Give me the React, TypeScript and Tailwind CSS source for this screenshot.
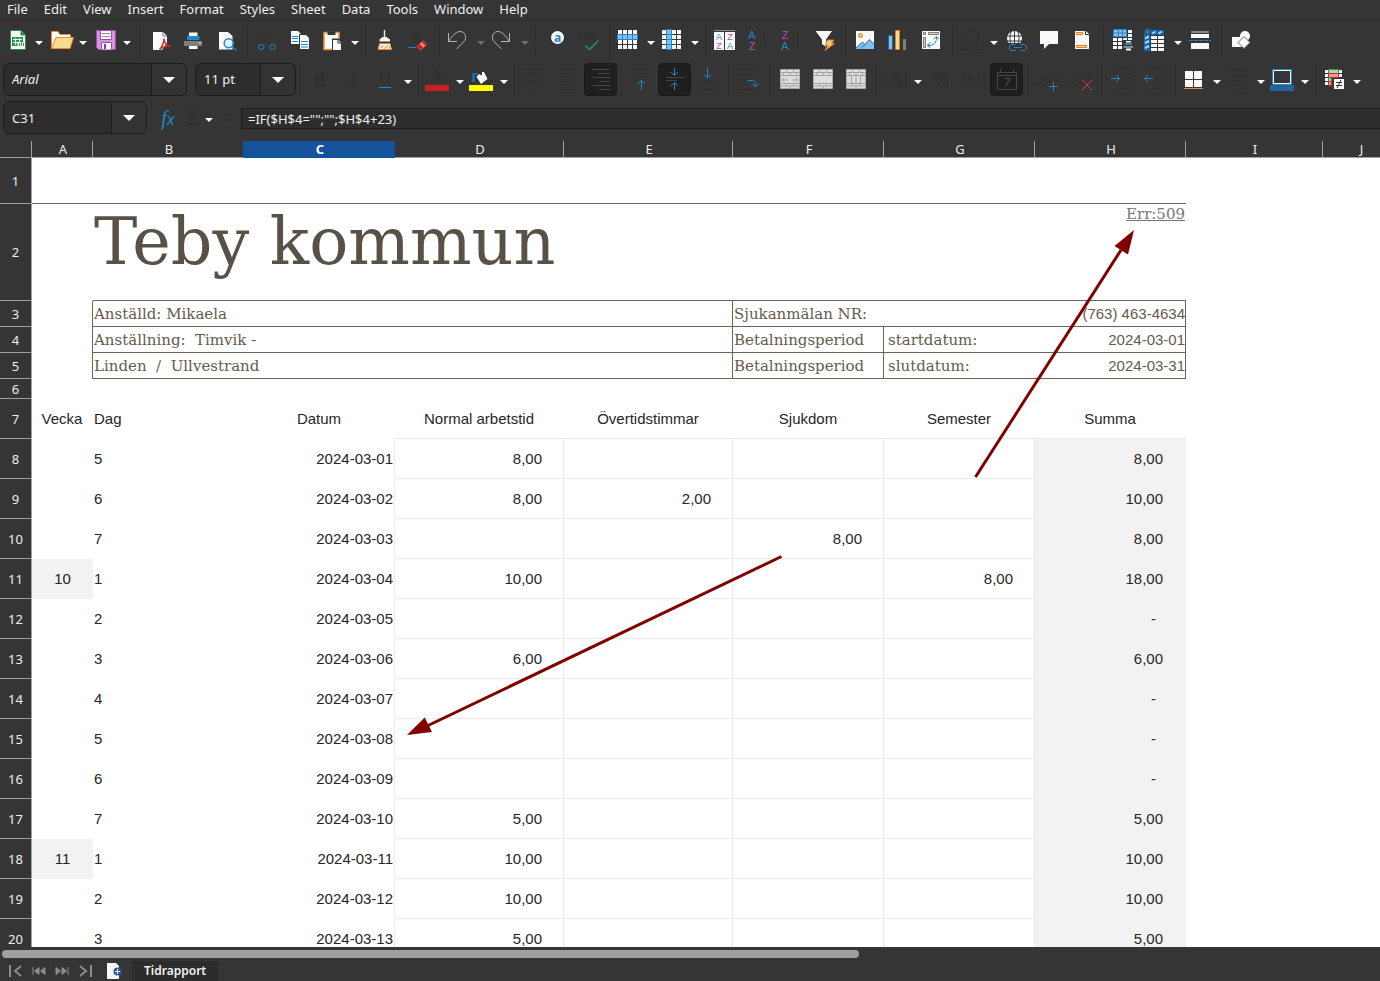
import { Fragment } from "react";
import type { ReactNode } from "react";

const FAINT = "#2f2f2f";
const BLUE = "#1e88c9";
const PURPLE = "#b04fb8";
const WHITE = "#fafafa";

interface ToolItem {
  label: string;
  icon: ReactNode;
  drop?: boolean;
  dimDrop?: boolean;
  active?: boolean;
}

type ToolGroup = ToolItem[];

/* Small drawing helpers */

const lines = (rows: [number, number, number][], color: string) =>
  rows.map(([x1, x2, y]) => (
    <path key={y} d={`M${x1} ${y}H${x2}`} stroke={color} />
  ));

const squares = (xs: number[], ys: number[], w: number, h: number) =>
  xs.map((x) =>
    ys.map((y) => (
      <rect key={`${x}-${y}`} x={x} y={y} width={w} height={h} fill={WHITE} />
    ))
  );

interface GlyphProps {
  x: number;
  y: number;
  size: number;
  color: string;
  bold?: boolean;
  italic?: boolean;
  family?: string;
  children: string;
}

const Glyph = ({ x, y, size, color, bold, italic, family = "Noto Sans", children }: GlyphProps) => (
  <text
    x={x}
    y={y}
    fontSize={size}
    fill={color}
    stroke="none"
    textAnchor="middle"
    fontFamily={`${family}, sans-serif`}
    fontWeight={bold ? 700 : 400}
    fontStyle={italic ? "italic" : "normal"}
  >
    {children}
  </text>
);

const Caret = ({ dim, large }: { dim?: boolean; large?: boolean }) => (
  <svg
    width={large ? 12 : 8}
    height={large ? 6 : 4}
    viewBox="0 0 12 6"
    aria-hidden="true"
  >
    <path d="M0 0H12L6 6Z" fill={dim ? "#6e6e6e" : "#ffffff"} />
  </svg>
);

/* Standard toolbar */

const standardGroups: ToolGroup[] = [
  [
    {
      label: "New",
      drop: true,
      icon: (
        <>
          <path d="M9.5 6.5H20L24.5 11V25.5H9.5Z" fill={WHITE} stroke="#2b8c46" />
          <path d="M20 6.5V11H24.5Z" fill="#2b8c46" stroke="#2b8c46" />
          <path d="M11 13H22V22H11Z" fill="#2b9a4b" />
          <path d="M12 15.5H21M12 18.5H21M14.5 14V21M18.5 14V18" stroke={WHITE} />
          <path d="M16.500 18H24V23H16.500Z" fill={WHITE} />
          <path d="M18.5 22V19M20.5 22V17M22.5 22V18.5" stroke="#1fae54" />
        </>
      ),
    },
    {
      label: "Open",
      drop: true,
      icon: (
        <>
          <path d="M6.5 24.5V7.5H13L15 10.5H25.5V14" fill={WHITE} stroke="#e98a36" />
          <path d="M6.5 24.5L11 13.5H28.5L25 24.5Z" fill="#f8db8f" stroke="#e98a36" />
        </>
      ),
    },
    {
      label: "Save",
      drop: true,
      icon: (
        <>
          <path d="M7.5 6.5H26.5V25.5H9.5L7.5 23.5Z" fill="#d596dc" stroke="#a24bae" />
          <path d="M11.5 6.5H22.5V15.5H11.5Z" fill={WHITE} stroke="#a24bae" />
          <path d="M13 9.5H21M13 12.5H21" stroke="#8d8d8d" />
          <path d="M12.5 25.5V18.5H22.5V25.5" fill={WHITE} stroke="#a24bae" />
          <path d="M15 20H17V25H15Z" fill="#8e3a9a" />
        </>
      ),
    },
  ],
  [
    {
      label: "Export as PDF",
      icon: (
        <>
          <path d="M9 8H19L23 12V19L18 26H9Z" fill={WHITE} />
          <path d="M19 8V12H23" fill="none" stroke="#777" />
          <path
            d="M15.500 25.500C18 23 20.500 18 20 14.500C20.500 19.500 22.500 22 26.500 22.500C23 21.500 19 22.500 15.500 25.500Z"
            fill="none"
            stroke="#d2322f"
            strokeWidth="1.5"
          />
        </>
      ),
    },
    {
      label: "Print",
      icon: (
        <>
          <path d="M12 8.5H20.5V12H12ZM12 21H20.5V25H12Z" fill={WHITE} />
          <path d="M10 12H22.500V16H10Z" fill={BLUE} />
          <path d="M7 17H25V22H7Z" fill="#7d7d7b" />
          <path d="M22 19H24" stroke={WHITE} />
        </>
      ),
    },
    {
      label: "Print Preview",
      icon: (
        <>
          <path d="M9 8H18L22.5 12V25.5H9Z" fill={WHITE} />
          <circle cx="18.7" cy="19.3" r="4.5" fill="#e4f0fa" stroke={BLUE} strokeWidth="1.5" />
          <path d="M22 22.5L26.5 26.5" stroke={BLUE} strokeWidth="1.5" />
        </>
      ),
    },
  ],
  [
    {
      label: "Cut",
      icon: (
        <g fill="none">
          <path d="M9.7 6.7L20 20M22 6.7L12 20" stroke={FAINT} />
          <circle cx="10.3" cy="23" r="2.7" stroke={BLUE} />
          <circle cx="21.7" cy="23" r="2.7" stroke={BLUE} />
        </g>
      ),
    },
    {
      label: "Copy",
      icon: (
        <>
          <path d="M7 7H14L17 10V20H7Z" fill={WHITE} />
          <path d="M8 12.5H14M8 14.5H14M8 17.5H14" stroke={BLUE} />
          <path d="M15.5 10.5H22L25.5 14V25.5H15.5Z" fill={WHITE} stroke="#353535" />
          <path d="M17 17.5H24M17 20.5H24M17 23H24" stroke={BLUE} />
        </>
      ),
    },
    {
      label: "Paste",
      drop: true,
      icon: (
        <>
          <path d="M7 8.5H22V25.5H7Z" fill={WHITE} stroke="#ee9440" strokeWidth="1.5" />
          <path d="M10.5 7.5H18.5V11H10.5Z" fill="#353535" />
          <path d="M15 14.5H22L25 18V27H15Z" fill="#353535" />
          <path d="M16 16H20.5V19.5H24V26H16Z" fill={WHITE} />
          <path d="M21.5 16L24 18.5H21.5Z" fill={WHITE} />
        </>
      ),
    },
  ],
  [
    {
      label: "Clone Formatting",
      icon: (
        <>
          <path d="M15.5 6V14" stroke="#e8e8e8" strokeWidth="1.5" />
          <path d="M13.5 13H17.5L21 15.5V17.5H10.5V15.5Z" fill={WHITE} />
          <path d="M10.5 19.5H21L22.5 25.5H9Z" fill="#f7ead0" stroke="#e8883a" />
          <path d="M12 24L14 22M15.5 24.5L19 21.5M19.5 24.5L21 23" stroke="#e8883a" />
        </>
      ),
    },
    {
      label: "Clear Direct Formatting",
      icon: (
        <>
          <Glyph x={15} y={22} size={17} color={FAINT}>
            A
          </Glyph>
          <path d="M6.5 23.5H14" stroke={BLUE} />
          <path d="M14.5 22.5L21 16.5L25 20.5L18.5 26.5Z" fill="#f08d8d" />
          <path d="M14.5 22.5L17.500 19.500L21.500 23.500L18.5 26.5Z" fill="#cf2020" />
          <path d="M21 16.500L25 20.500L23.500 22L19.500 18Z" fill="#cf2020" />
        </>
      ),
    },
  ],
  [
    {
      label: "Undo",
      drop: true,
      dimDrop: true,
      icon: (
        <path
          d="M5.5 9V17.5H14M5.5 17.5C8 14 12 7.5 17 7.5C22.5 7.5 24.5 14 20.5 18L13.5 25"
          fill="none"
          stroke="#b4b4b4"
        />
      ),
    },
    {
      label: "Redo",
      drop: true,
      dimDrop: true,
      icon: (
        <path
          d="M22.5 9V17.5H14M22.5 17.5C20 14 16 7.5 11 7.5C5.5 7.5 3.5 14 7.5 18L14.5 25"
          fill="none"
          stroke="#b4b4b4"
        />
      ),
    },
  ],
  [
    {
      label: "Find and Replace",
      icon: (
        <>
          <path d="M14 18.5L6 26" stroke={FAINT} />
          <circle cx="18.5" cy="13.5" r="6.5" fill={WHITE} />
          <Glyph x={18.5} y={17.5} size={12} color={BLUE} bold>
            a
          </Glyph>
        </>
      ),
    },
    {
      label: "Spelling",
      icon: (
        <>
          <Glyph x={15} y={16} size={12} color={FAINT}>
            abc
          </Glyph>
          <path d="M13.5 21.5L17.5 25.5L26.5 16.5" fill="none" stroke="#1f9d4d" strokeWidth="1.5" />
        </>
      ),
    },
  ],
  [
    {
      label: "Row",
      drop: true,
      icon: (
        <>
          {squares([5, 10, 15, 20], [6, 11, 16, 21], 4, 4)}
          <path d="M4.5 10.5H24.5V15.5H4.5Z" fill="#83beec" stroke={BLUE} />
          <path d="M9.5 11V15M14.5 11V15M19.5 11V15" stroke={BLUE} />
        </>
      ),
    },
    {
      label: "Column",
      drop: true,
      icon: (
        <>
          {squares([5, 10, 15, 20], [6, 11, 16, 21], 4, 4)}
          <path d="M9.5 5.5H14.5V25.5H9.5Z" fill="#83beec" stroke={BLUE} />
          <path d="M10 10.5H14M10 15.5H14M10 20.5H14" stroke={BLUE} />
        </>
      ),
    },
  ],
  [
    {
      label: "Sort",
      icon: (
        <>
          <path d="M5 6.5H26" stroke="#8a8a8a" />
          <path d="M5 8H15V26H5ZM16 8H26V26H16Z" fill={WHITE} />
          <Glyph x={10} y={16} size={9} color={BLUE} family="Liberation Sans">
            A
          </Glyph>
          <Glyph x={10} y={25} size={9} color={PURPLE} family="Liberation Sans">
            Z
          </Glyph>
          <Glyph x={21} y={16} size={9} color={PURPLE} family="Liberation Sans">
            Z
          </Glyph>
          <Glyph x={21} y={25} size={9} color={BLUE} family="Liberation Sans">
            A
          </Glyph>
        </>
      ),
    },
    {
      label: "Sort Ascending",
      icon: (
        <>
          <Glyph x={10} y={15} size={11} color={BLUE} family="Liberation Sans">
            A
          </Glyph>
          <Glyph x={10} y={26} size={11} color={PURPLE} family="Liberation Sans">
            Z
          </Glyph>
          <path d="M22.5 8V23M18.5 19.5L22.5 23.5L26.5 19.5" fill="none" stroke={FAINT} />
        </>
      ),
    },
    {
      label: "Sort Descending",
      icon: (
        <>
          <Glyph x={10} y={15} size={11} color={PURPLE} family="Liberation Sans">
            Z
          </Glyph>
          <Glyph x={10} y={26} size={11} color={BLUE} family="Liberation Sans">
            A
          </Glyph>
          <path d="M22.5 8V23M18.5 19.5L22.5 23.5L26.5 19.5" fill="none" stroke={FAINT} />
        </>
      ),
    },
    {
      label: "AutoFilter",
      icon: (
        <>
          <path d="M7.5 7H24L18 15.5V23L14 20V15.5Z" fill={WHITE} />
          <path d="M19.5 16H26L23.5 19.5H26.5L17 26.5L20 21.5H17Z" fill="#f8c777" stroke="#e87b22" />
        </>
      ),
    },
  ],
  [
    {
      label: "Insert Image",
      icon: (
        <>
          <path d="M7 7H25V25H7Z" fill={WHITE} />
          <circle cx="11.5" cy="11.5" r="2" fill="#f8c777" stroke="#e87b22" />
          <path d="M7 24L13.5 18L16 20.5L20.5 15.5L25 20.5V25H7Z" fill="#83beec" />
          <path d="M7 24L13.5 18L16 20.5L20.5 15.5L25 20.5M12 24.5L16 20.5" fill="none" stroke="#1f6fb5" />
        </>
      ),
    },
    {
      label: "Insert Chart",
      icon: (
        <>
          <path d="M6.5 11.5H10.5V25.5H6.5Z" fill="#83beec" stroke="#0f6cbd" />
          <path d="M13.5 6.5H17.5V25.5H13.5Z" fill="#f8db8f" stroke="#e87b22" />
          <path d="M21 15H24V26H21Z" fill="#7d7d7b" />
        </>
      ),
    },
    {
      label: "Insert Pivot Table",
      icon: (
        <>
          <path d="M7 7H25V25H7Z" fill={WHITE} />
          <path d="M8.5 8.5H10.5V10.5H8.5ZM13.5 8.5H23.5V10.5H13.5ZM8.5 13.5H10.5V23.5H8.5Z" fill="#d5d5d5" stroke="#7a7a7a" />
          <path d="M21.5 13C22 18 18.5 22 13 21.5M18.5 15L21.5 12.5L24 15M15.5 18.5L12.5 21.5L15.5 24" fill="none" stroke={BLUE} />
        </>
      ),
    },
  ],
  [
    {
      label: "Insert Special Characters",
      drop: true,
      icon: (
        <path
          d="M4.5 25.5H11V22.5C3 17 6 6.5 14.5 6.5C23 6.5 26 17 18 22.5V25.5H24.5"
          fill="none"
          stroke={FAINT}
        />
      ),
    },
    {
      label: "Insert Hyperlink",
      icon: (
        <>
          <circle cx="14.5" cy="14.5" r="7.5" fill={WHITE} />
          <path d="M7 12H22M7 17H22M14.5 7V22M11.5 7C9.5 12 9.5 17 11.5 22M17.5 7C19.5 12 19.5 17 17.5 22" fill="none" stroke="#353535" />
          <path d="M8 19H28V28H8Z" fill="#353535" />
          <path d="M15.5 20.5H11L9.5 22V25L11 26.5H15.5M20.5 20.5H25L26.5 22V25L25 26.5H20.5M14 23.5H22" fill="none" stroke={BLUE} />
        </>
      ),
    },
    {
      label: "Insert Comment",
      icon: <path d="M7 7H25V20H16L11 25V20H7Z" fill={WHITE} />,
    },
    {
      label: "Headers and Footers",
      icon: (
        <>
          <path d="M9 7H19V11H23V25H9Z" fill={WHITE} />
          <path d="M20 7L23 10H20Z" fill={WHITE} />
          <path d="M10.5 8.5H16.5V10.5H10.5ZM10.5 21.5H20.5V23.5H10.5Z" fill="#f8db8f" stroke="#e87b22" />
        </>
      ),
    },
  ],
  [
    {
      label: "Define Print Area",
      icon: (
        <>
          {squares([6, 11, 16, 21], [6, 10, 14, 18, 22], 4, 3)}
          <path d="M6.5 5.5H19.5V12.5H6.5Z" fill="#83beec" stroke={BLUE} />
          <path d="M11.5 6V12M15.5 6V12M7 9H20" stroke={BLUE} />
          <path d="M15 16H27V28H15Z" fill="#353535" />
          <path d="M19 17H24V18.5H19ZM19 24.5H24V26.5H19Z" fill={WHITE} />
          <path d="M18 19H25V21H18Z" fill={BLUE} />
          <path d="M16.5 22H26V24H16.5Z" fill="#8a8a8a" />
        </>
      ),
    },
    {
      label: "Freeze Rows and Columns",
      drop: true,
      icon: (
        <>
          {squares([11, 18], [12, 16, 20, 24], 6, 3)}
          <path d="M11 6H24V11H11ZM4 11H10V27H4Z" fill="#1368b4" />
          <path d="M12 9.5L15.5 7.5M18.5 9.5L22 7.5M5 14.5L9 12.5M5 19L9 17M5 24L9 22" stroke="#a9d3f5" strokeWidth="2" />
          <path d="M7.5 4V12M3.5 8H11.5M4.5 5L10.5 11M10.5 5L4.5 11" stroke={BLUE} />
        </>
      ),
    },
    {
      label: "Split Window",
      icon: (
        <>
          <path d="M7 7H25V9H7Z" fill="#8a8a8a" />
          <path d="M7 10H25V14H7ZM7 19H25V25H7Z" fill={WHITE} />
          <path d="M5 16.5H27" stroke={BLUE} strokeDasharray="4 1" />
        </>
      ),
    },
  ],
  [
    {
      label: "Show Draw Functions",
      icon: (
        <>
          <path d="M7 13H17V23H7Z" fill={WHITE} />
          <circle cx="20" cy="12" r="5" fill={WHITE} />
          <path d="M19 12.5L25 18.5L19 24.5L13 18.5Z" fill={WHITE} stroke="#6a6a6a" />
        </>
      ),
    },
  ],
];

/* Formatting toolbar */

const brickWall = (
  <>
    <path d="M7.5 6.5H26.5V25.5H7.5Z" fill="#dedede" stroke="#ababab" />
    <path d="M7 9.5H27M7 12.5H27M7 20.5H27M7 23H27M13.5 6V9M20.5 6V9M10.5 10V12M17 10V12M23.5 10V12M13.5 21V23M20.5 21V23M17 23V26" stroke="#a3a3a3" />
  </>
);

const formattingGroups: ToolGroup[] = [
  [
    {
      label: "Bold",
      icon: (
        <Glyph x={16} y={23} size={18} color={FAINT} bold>
          B
        </Glyph>
      ),
    },
    {
      label: "Italic",
      icon: (
        <Glyph x={16} y={23} size={18} color={FAINT} italic>
          I
        </Glyph>
      ),
    },
    {
      label: "Underline",
      drop: true,
      icon: (
        <>
          <Glyph x={15} y={21} size={17} color={FAINT}>
            U
          </Glyph>
          <path d="M9 24.5H21" stroke={BLUE} />
        </>
      ),
    },
  ],
  [
    {
      label: "Font Color",
      drop: true,
      icon: (
        <>
          <Glyph x={15} y={20} size={18} color={FAINT}>
            A
          </Glyph>
          <path d="M3 22H27V28H3Z" fill="#c9211e" />
        </>
      ),
    },
    {
      label: "Highlighting Color",
      drop: true,
      icon: (
        <>
          <path d="M6 19V10H12V12H9V19Z" fill="#1368b4" />
          <path d="M10.5 14L13 11L16 12.5V9H18L21.5 16L15 21Z" fill={WHITE} />
          <path d="M3 22H27V28H3Z" fill="#ffff00" />
        </>
      ),
    },
  ],
  [
    {
      label: "Align Left",
      icon: lines([[8, 26, 6.5], [8, 20, 10.5], [8, 26, 14.5], [8, 20, 18.5], [8, 26, 22.5], [8, 16, 26.5]], FAINT),
    },
    {
      label: "Center Horizontally",
      icon: lines([[8, 26, 6.5], [11, 23, 10.5], [8, 26, 14.5], [11, 23, 18.5], [8, 26, 22.5], [13, 21, 26.5]], FAINT),
    },
    {
      label: "Align Right",
      active: true,
      icon: lines([[8, 26, 6.5], [14, 26, 10.5], [8, 26, 14.5], [15, 26, 18.5], [8, 26, 22.5], [15, 26, 26.5]], "#464646"),
    },
  ],
  [
    {
      label: "Align Top",
      icon: (
        <>
          {lines([[8, 26, 6.5], [8, 20, 10.5], [8, 26, 14.5]], FAINT)}
          <path d="M16.5 27V17.5M13 21L16.5 17.5L20 21" fill="none" stroke={BLUE} />
        </>
      ),
    },
    {
      label: "Center Vertically",
      active: true,
      icon: (
        <>
          {lines([[8, 26, 14.5], [8, 19, 17.5]], "#464646")}
          <path d="M16.5 5V12M13 9L16.5 12.5L20 9M16.5 27V20M13 23L16.5 19.5L20 23" fill="none" stroke={BLUE} />
        </>
      ),
    },
    {
      label: "Align Bottom",
      icon: (
        <>
          {lines([[8, 26, 18.5], [8, 20, 22.5], [8, 26, 26.5]], FAINT)}
          <path d="M16.5 5V14.5M13 11.5L16.5 15L20 11.5" fill="none" stroke={BLUE} />
        </>
      ),
    },
  ],
  [
    {
      label: "Wrap Text",
      icon: (
        <>
          {lines([[8, 26, 6.5], [8, 22, 11.5], [8, 14, 17.5], [8, 14, 21.5], [8, 26, 26.5]], FAINT)}
          <path d="M15.5 17.5H20.5C23 17.5 23.5 20 23.5 23.5M20 20.5L23.5 24L27 20.5" fill="none" stroke={BLUE} />
        </>
      ),
    },
  ],
  [
    {
      label: "Merge and Center Cells",
      icon: (
        <>
          {brickWall}
          <path d="M9 17H15M19 17H25M11.5 14.5L9 17L11.5 19.5M22.5 14.5L25 17L22.5 19.5" fill="none" stroke="#a3a3a3" />
        </>
      ),
    },
    { label: "Merge Cells", icon: brickWall },
    {
      label: "Unmerge Cells",
      icon: (
        <>
          {brickWall}
          <path d="M12.5 13V20M17 13V20M21.5 13V20" stroke="#a3a3a3" />
        </>
      ),
    },
  ],
  [
    {
      label: "Format as Currency",
      drop: true,
      icon: (
        <>
          <path d="M4.5 10.5H25.5V23.5H4.5Z" fill="none" stroke={FAINT} />
          <circle cx="15" cy="15" r="3" fill={FAINT} />
          <path d="M10 21.5H15M10 24.5H15M17 18.5H22M17 21.5H22M17 24.5H22" stroke={FAINT} />
        </>
      ),
    },
    {
      label: "Format as Percent",
      icon: (
        <Glyph x={17} y={24} size={20} color={FAINT}>
          %
        </Glyph>
      ),
    },
    {
      label: "Format as Number",
      icon: (
        <Glyph x={17} y={23} size={18} color={FAINT}>
          0.0
        </Glyph>
      ),
    },
    {
      label: "Format as Date",
      active: true,
      icon: (
        <>
          <path d="M7.5 9.5H26.5V26.5H7.5ZM7.5 12.5H26.5M10.5 6V9M23.5 6V9" fill="none" stroke="#464646" />
          <Glyph x={17} y={24} size={12} color="#505050" italic>
            7
          </Glyph>
        </>
      ),
    },
  ],
  [
    {
      label: "Add Decimal Place",
      icon: (
        <>
          <Glyph x={15} y={23} size={17} color={FAINT}>
            .00
          </Glyph>
          <path d="M22.5 19V28M18 23.5H27" stroke={BLUE} />
        </>
      ),
    },
    {
      label: "Delete Decimal Place",
      icon: (
        <>
          <Glyph x={15} y={23} size={17} color={FAINT}>
            .00
          </Glyph>
          <path d="M18 17L28 27M28 17L18 27" stroke="#e03a3a" />
        </>
      ),
    },
  ],
  [
    {
      label: "Increase Indent",
      icon: (
        <>
          {lines([[9, 27, 5.5], [18, 27, 10.5], [18, 27, 15.5], [18, 27, 20.5], [9, 27, 25.5]], FAINT)}
          <path d="M6 15.5H14.5M11 12L14.5 15.5L11 19" fill="none" stroke={BLUE} />
        </>
      ),
    },
    {
      label: "Decrease Indent",
      icon: (
        <>
          {lines([[9, 27, 5.5], [18, 27, 10.5], [18, 27, 15.5], [18, 27, 20.5], [9, 27, 25.5]], FAINT)}
          <path d="M15 15.5H6.5M10 12L6.5 15.5L10 19" fill="none" stroke={BLUE} />
        </>
      ),
    },
  ],
  [
    {
      label: "Borders",
      drop: true,
      icon: (
        <>
          <path d="M6 8H14V16H6ZM15 8H23V16H15ZM6 17H14V24H6ZM15 17H23V24H15Z" fill={WHITE} />
          <path d="M5 25.5H24" stroke="#ee8a35" />
        </>
      ),
    },
    {
      label: "Border Style",
      drop: true,
      icon: (
        <>
          <path d="M6 7H24" stroke={FAINT} strokeWidth="2" />
          <path d="M6 12.5H24M6 17.5H24" stroke={FAINT} />
          <path d="M6 21.5H24M6 25.5H24" stroke={FAINT} strokeDasharray="3 1" />
        </>
      ),
    },
    {
      label: "Border Color",
      drop: true,
      icon: (
        <>
          <path d="M5.5 6.5H24.5V21.5H5.5Z" fill="none" stroke={BLUE} />
          <path d="M6.5 7.5H23.5V20.5H6.5Z" fill="none" stroke={WHITE} />
          <path d="M3 22H27V28H3Z" fill="#2a6099" />
        </>
      ),
    },
  ],
  [
    {
      label: "Conditional Formatting",
      drop: true,
      icon: (
        <>
          {squares([6, 10, 15, 20], [7, 11, 15, 19], 3, 3)}
          <path d="M9.5 6.5H19.5V10.5H9.5Z" fill="#a5dcb3" stroke="#1f9d4d" />
          <path d="M9.5 10.5H19.5V14.5H9.5Z" fill="#f59a9a" stroke="#e02020" />
          <path d="M9.5 15H12.5V18.5H9.5Z" fill="#a5dcb3" stroke="#1f9d4d" />
          <path d="M9.5 18.5H12.5V22.5H9.5Z" fill="#f59a9a" stroke="#e02020" />
          <path d="M14 15H26V27H14Z" fill="#353535" />
          <path d="M15 16H25V26H15Z" fill={WHITE} />
          <path d="M17 19.5H23M17 22.5H23M18 25L22 17" stroke="#333" />
        </>
      ),
    },
  ],
];

const Separator = () => (
  <div className="flex h-8 w-2 shrink-0 justify-center">
    <div className="w-px bg-[#2f2f2f]" />
  </div>
);

const ToolButton = ({ label, icon, drop, dimDrop, active }: ToolItem) => (
  <>
    <button
      type="button"
      aria-label={label}
      className={
        active
          ? "size-[33px] shrink-0 rounded border border-[#191919] bg-[#1f1f1f]"
          : "size-[33px] shrink-0 rounded border border-transparent"
      }
    >
      <svg className="-m-px" width="33" height="33" viewBox="0 0 33 33" aria-hidden="true">
        {icon}
      </svg>
    </button>
    {drop && (
      <button
        type="button"
        aria-label={`${label} options`}
        className="flex h-[33px] w-[11px] shrink-0 items-center pt-1 pl-px"
      >
        <Caret dim={dimDrop} />
      </button>
    )}
  </>
);

const ToolGroups = ({ groups }: { groups: ToolGroup[] }) =>
  groups.map((group, i) => (
    <Fragment key={group[0].label}>
      {i > 0 && <Separator />}
      {group.map((item) => (
        <ToolButton key={item.label} {...item} />
      ))}
    </Fragment>
  ));

interface ComboProps {
  label: string;
  value: string;
  className: string;
  inputClass?: string;
}

const Combo = ({ label, value, className, inputClass = "" }: ComboProps) => (
  <div
    className={`flex h-[33px] shrink-0 overflow-hidden rounded-md border border-[#1c1c1c] bg-[#2d2d2d] ${className}`}
  >
    <input
      type="text"
      aria-label={label}
      defaultValue={value}
      className={`min-w-0 flex-1 bg-transparent pl-2 text-[#f0f0f0] outline-none ${inputClass}`}
    />
    <button
      type="button"
      aria-label={`${label} list`}
      className="flex w-[35px] items-center justify-center border-l border-[#1c1c1c] bg-[#333333]"
    >
      <Caret large />
    </button>
  </div>
);

const menus = ["File", "Edit", "View", "Insert", "Format", "Styles", "Sheet", "Data", "Tools", "Window", "Help"];

const MenuBar = () => (
  <nav className="flex h-[21px] shrink-0 items-start gap-4 border-b border-[#2d2d2d] pl-[7px]">
    {menus.map((menu) => (
      <button key={menu} type="button" className="leading-[18px]">
        {menu}
      </button>
    ))}
  </nav>
);

const FormulaBar = () => (
  <div className="flex h-[42px] shrink-0 items-start pt-0.5">
    <Combo label="Name Box" value="C31" className="ml-[3px] w-[144px]" inputClass="pt-0.5" />
    <Separator />
    <button
      type="button"
      aria-label="Function Wizard"
      className="h-[33px] w-[26px] text-center font-['Liberation_Serif',serif] text-xl italic leading-[34px] text-[#1e88c9]"
    >
      f<span className="font-['Noto_Sans',sans-serif] text-base">x</span>
    </button>
    <button type="button" aria-label="Select Function" className="h-[33px] w-[23px] text-xl text-[#2f2f2f]">
      Σ
    </button>
    <button
      type="button"
      aria-label="Function options"
      className="flex h-[33px] w-[11px] items-center pt-1 pl-px"
    >
      <Caret />
    </button>
    <button type="button" aria-label="Formula" className="h-[33px] w-[26px] text-xl text-[#2f2f2f]">
      =
    </button>
    <input
      type="text"
      aria-label="Input line"
      defaultValue={'=IF($H$4="";"";$H$4+23)'}
      className="mt-[7px] h-[21px] min-w-0 flex-1 border-y border-l border-[#1c1c1c] bg-[#2d2d2d] pl-[6px] text-[#f0f0f0] outline-none"
    />
  </div>
);

/* Sheet */

const columns = [
  { name: "A", width: "w-[61px]" },
  { name: "B", width: "w-[151px]" },
  { name: "C", width: "w-[151px]" },
  { name: "D", width: "w-[169px]" },
  { name: "E", width: "w-[169px]" },
  { name: "F", width: "w-[151px]" },
  { name: "G", width: "w-[151px]" },
  { name: "H", width: "w-[151px]" },
  { name: "I", width: "w-[137px]" },
  { name: "J", width: "" },
];

interface DayRow {
  row: number;
  week?: string;
  day: string;
  date: string;
  work?: string;
  overtime?: string;
  sick?: string;
  vacation?: string;
  sum: string;
}

const days: DayRow[] = [
  { row: 8, day: "5", date: "2024-03-01", work: "8,00", sum: "8,00" },
  { row: 9, day: "6", date: "2024-03-02", work: "8,00", overtime: "2,00", sum: "10,00" },
  { row: 10, day: "7", date: "2024-03-03", sick: "8,00", sum: "8,00" },
  { row: 11, week: "10", day: "1", date: "2024-03-04", work: "10,00", vacation: "8,00", sum: "18,00" },
  { row: 12, day: "2", date: "2024-03-05", sum: "-" },
  { row: 13, day: "3", date: "2024-03-06", work: "6,00", sum: "6,00" },
  { row: 14, day: "4", date: "2024-03-07", sum: "-" },
  { row: 15, day: "5", date: "2024-03-08", sum: "-" },
  { row: 16, day: "6", date: "2024-03-09", sum: "-" },
  { row: 17, day: "7", date: "2024-03-10", work: "5,00", sum: "5,00" },
  { row: 18, week: "11", day: "1", date: "2024-03-11", work: "10,00", sum: "10,00" },
  { row: 19, day: "2", date: "2024-03-12", work: "10,00", sum: "10,00" },
  { row: 20, day: "3", date: "2024-03-13", work: "5,00", sum: "5,00" },
];

const RowHead = ({ n }: { n: number }) => (
  <th
    scope="row"
    className="border-b border-r border-[#a0a0a0] bg-[#353535] p-0 text-center font-['Noto_Sans',sans-serif] text-[13px] font-normal text-[#eeeeee]"
  >
    {n}
  </th>
);

const box = "border-b border-r border-[#6f6355] p-0 text-[#665a4d]";
const boxText = `${box} whitespace-pre pl-px font-['DejaVu_Serif',serif]`;
const hours = "border-b border-r border-[#ebebeb] p-0 pr-[21px] text-right";

const Sheet = () => (
  <div className="relative min-h-0 flex-1 overflow-hidden bg-white">
    <table className="w-full min-w-[1360px] table-fixed border-separate border-spacing-0 font-['Liberation_Sans',sans-serif] text-[15px] leading-5 text-[#262626]">
      <colgroup>
        <col className="w-8" />
        {columns.map(({ name, width }) => (
          <col key={name} className={width} />
        ))}
      </colgroup>
      <thead className="bg-[#353535] font-['Noto_Sans',sans-serif] text-[13px] leading-4 text-[#eeeeee]">
        <tr>
          <td className="border-b border-r border-[#a0a0a0] p-0" />
          {columns.map(({ name }) => (
            <th
              key={name}
              scope="col"
              className={
                name === "C"
                  ? "border-b border-r border-[#15529c] bg-[#15529c] p-0 pl-0.5 font-bold text-white"
                  : name === "B"
                    ? "border-b border-r border-b-[#a0a0a0] border-r-[#15529c] p-0 pl-0.5 font-normal"
                    : name === "J"
                      ? "border-b border-[#a0a0a0] p-0 pl-5 font-normal"
                      : "border-b border-r border-[#a0a0a0] p-0 pl-0.5 font-normal"
              }
            >
              {name}
            </th>
          ))}
        </tr>
      </thead>
      <tbody>
        <tr className="h-[46px]">
          <RowHead n={1} />
          <td colSpan={8} className="border-b border-[#6f6355] p-0" />
          <td colSpan={2} className="p-0" />
        </tr>
        <tr className="h-[97px]">
          <RowHead n={2} />
          <td className="p-0" />
          <td
            colSpan={6}
            className="border-b border-[#6f6355] p-0 pl-px align-top font-['DejaVu_Serif',serif] text-[65px] leading-[76px] text-[#595046]"
          >
            Teby kommun
          </td>
          <td className="border-b border-[#6f6355] p-0 pr-px text-right align-top font-['DejaVu_Serif',serif] text-[#777572]">
            <a href="#err" className="underline">
              Err:509
            </a>
          </td>
          <td colSpan={2} className="p-0" />
        </tr>
        <tr className="h-[26px]">
          <RowHead n={3} />
          <td className="border-r border-[#6f6355] p-0" />
          <td colSpan={4} className={boxText}>
            Anställd: Mikaela
          </td>
          <td colSpan={2} className="border-b border-[#6f6355] p-0 pl-px font-['DejaVu_Serif',serif] text-[#665a4d]">
            Sjukanmälan NR:
          </td>
          <td className={`${box} text-right`}>(763) 463-4634</td>
          <td colSpan={2} className="p-0" />
        </tr>
        <tr className="h-[26px]">
          <RowHead n={4} />
          <td className="border-r border-[#6f6355] p-0" />
          <td colSpan={4} className={boxText}>
            {"Anställning:  Timvik -"}
          </td>
          <td className={boxText}>Betalningsperiod</td>
          <td className="border-b border-[#6f6355] p-0 pl-1 font-['DejaVu_Serif',serif] text-[#665a4d]">
            startdatum:
          </td>
          <td className={`${box} text-right`}>2024-03-01</td>
          <td colSpan={2} className="p-0" />
        </tr>
        <tr className="h-[26px]">
          <RowHead n={5} />
          <td className="border-r border-[#6f6355] p-0" />
          <td colSpan={4} className={boxText}>
            {"Linden  /  Ullvestrand"}
          </td>
          <td className={boxText}>Betalningsperiod</td>
          <td className="border-b border-[#6f6355] p-0 pl-1 font-['DejaVu_Serif',serif] text-[#665a4d]">
            slutdatum:
          </td>
          <td className={`${box} text-right`}>2024-03-31</td>
          <td colSpan={2} className="p-0" />
        </tr>
        <tr className="h-5 leading-4">
          <RowHead n={6} />
          <td colSpan={10} className="p-0" />
        </tr>
        <tr className="h-10 text-center">
          <RowHead n={7} />
          <td className="p-0 pr-px">Vecka</td>
          <td className="p-0 pl-px text-left">Dag</td>
          <td className="p-0 pr-px">Datum</td>
          {["Normal arbetstid", "Övertidstimmar", "Sjukdom", "Semester", "Summa"].map((title) => (
            <td key={title} className="border-b border-[#ebebeb] p-0 pr-px">
              {title}
            </td>
          ))}
          <td colSpan={2} className="p-0" />
        </tr>
        {days.map((d) => (
          <tr key={d.row} className="h-10">
            <RowHead n={d.row} />
            <td className={d.week ? "bg-[#f2f2f2] p-0 text-center" : "p-0"}>{d.week}</td>
            <td className="p-0 pl-px">{d.day}</td>
            <td className="border-r border-[#ebebeb] p-0 pr-px text-right">{d.date}</td>
            <td className={hours}>{d.work}</td>
            <td className={hours}>{d.overtime}</td>
            <td className={hours}>{d.sick}</td>
            <td className={hours}>{d.vacation}</td>
            <td className={d.sum === "-" ? "bg-[#f2f2f2] p-0 pr-[30px] text-right" : "bg-[#f2f2f2] p-0 pr-[23px] text-right"}>
              {d.sum}
            </td>
            <td colSpan={2} className="p-0" />
          </tr>
        ))}
      </tbody>
    </table>

    {/* Drawn arrows over the cells */}
    <svg
      className="pointer-events-none absolute left-0 top-0"
      width="1200"
      height="620"
      viewBox="0 141 1200 620"
      fill="#800000"
      stroke="#800000"
      aria-hidden="true"
    >
      <path d="M975.5 477L1121 250" strokeWidth="3" />
      <path d="M1134 230L1128 254.5L1114.5 246Z" stroke="none" />
      <path d="M781.5 556.5L427 726" strokeWidth="3" />
      <path d="M407 735L424.7 717.5L432 732Z" stroke="none" />
    </svg>
  </div>
);

const navButtons = [
  { label: "First sheet", d: "M1 0V12M12 1L6 6L12 11", open: true },
  { label: "Previous sheet", d: "M1 2V10M7 2.5L2.5 6L7 9.5ZM13 2.5L8.5 6L13 9.5Z" },
  { label: "Next sheet", d: "M13 2V10M7 2.5L11.5 6L7 9.5ZM1 2.5L5.5 6L1 9.5Z" },
  { label: "Last sheet", d: "M13 0V12M2 1L8 6L2 11", open: true },
];

const SheetTabs = () => (
  <footer className="flex h-5 shrink-0 items-center pl-1">
    {navButtons.map(({ label, d, open }) => (
      <button key={label} type="button" aria-label={label} className="flex w-[23px] justify-center">
        <svg
          width="14"
          height="12"
          viewBox="0 0 14 12"
          fill={open ? "none" : "#8c8c8c"}
          stroke="#8c8c8c"
          strokeWidth={open ? 2 : 1}
          aria-hidden="true"
        >
          <path d={d} />
        </svg>
      </button>
    ))}
    <button type="button" aria-label="Add sheet" className="flex w-9 justify-center">
      <svg width="16" height="16" viewBox="0 0 16 16" aria-hidden="true">
        <path d="M1 0H10L13 3V16H1Z" fill="#f6f6f4" />
        <circle cx="11.5" cy="8.500" r="4" fill="#2c5aa0" />
        <path d="M11.5 6V11M9 8.5H14" stroke="#fff" />
      </svg>
    </button>
    <button type="button" className="h-5 bg-[#2c2c2c] px-3 text-xs font-semibold leading-5 text-[#f0f0f0]">
      Tidrapport
    </button>
  </footer>
);

const App = () => {
  return (
    <div className="flex h-screen flex-col overflow-hidden bg-[#353535] font-['Noto_Sans',sans-serif] text-[13px] text-[#eeeeee]">
      <MenuBar />
      <div className="flex h-[39px] shrink-0 items-center pl-px">
        <ToolGroups groups={standardGroups.slice(0, 1)} />
        {/* the file group stands a little apart from the export group */}
        <div className="w-[3px] shrink-0" />
        <Separator />
        <ToolGroups groups={standardGroups.slice(1)} />
      </div>
      <div className="flex h-[39px] shrink-0 items-center gap-2 pl-[3px]">
        <Combo label="Font Name" value="Arial" className="w-[184px]" inputClass="italic" />
        <div className="flex items-center">
          <Combo label="Font Size" value="11 pt" className="w-[101px]" />
          <Separator />
          <ToolGroups groups={formattingGroups} />
        </div>
      </div>
      <FormulaBar />
      <Sheet />
      <div className="flex h-[14px] shrink-0 items-center pl-0.5">
        <div className="h-2 w-[857px] rounded-full bg-[#a0a09e]" />
      </div>
      <SheetTabs />
    </div>
  );
};

export default App;
